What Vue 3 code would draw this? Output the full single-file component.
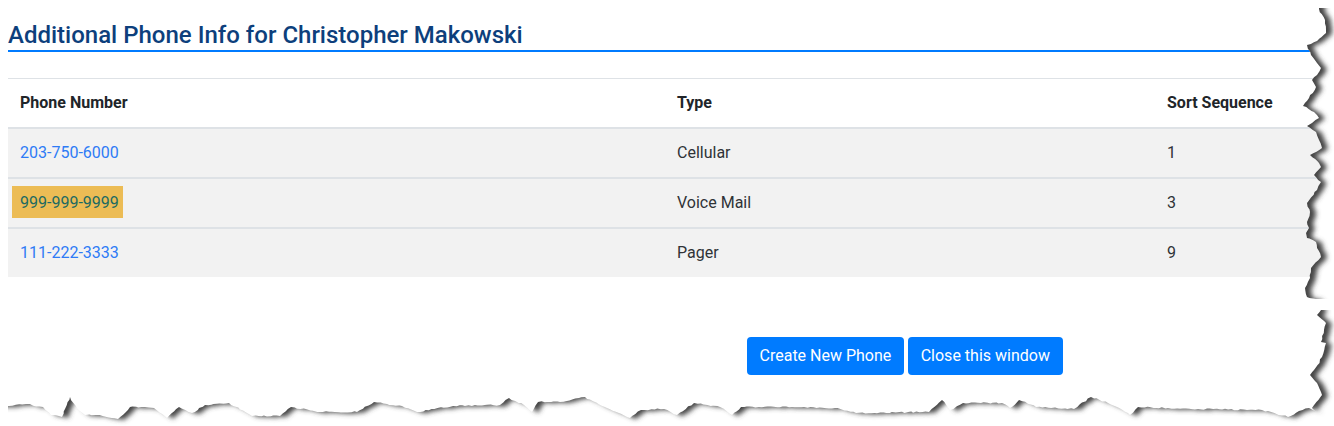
<script setup>
const rows = [
  { phone: '203-750-6000', type: 'Cellular', sort: 1 },
  { phone: '999-999-9999', type: 'Voice Mail', sort: 3, mark: true },
  { phone: '111-222-3333', type: 'Pager', sort: 9 }
]
const right = [
  [1319,9],[1325,20],[1326,33],[1317,41],[1307,45],[1311,55],[1317,63],[1321,68],[1317,75],[1312,80],[1316,87],[1309,98],[1303,106],[1314,112],[1317,115],[1319,118],[1312,123],[1307,126],[1316,132],[1319,140],
  [1322,148],[1310,155],[1319,163],[1321,167],[1314,175],[1321,182],[1317,190],[1307,203],[1310,212],[1307,222],[1309,228],[1306,233],[1307,238],[1316,242],[1317,248],[1321,257],[1311,268],[1310,278],
  [1305,288],[1307,297],[1316,299],[1321,310],[1317,315],[1326,323],[1324,330],[1321,342],[1326,343],[1322,357],[1314,370],[1310,375],[1317,383],[1322,395],[1312,408],[1317,412]
]
const bottom = [
  [9,406],[26,404],[43,407],[51,415],[62,417],[70,397],[77,408],[85,415],[96,415],[118,419],[130,407],[154,408],[167,418],[179,407],[192,413],[205,405],[229,403],[252,416],[280,416],[291,407],[320,412],[357,412],[374,402],[402,406],[417,412],[453,406],[500,405],[509,398],[524,405],[532,412],[538,402],[560,402],[585,397],[607,408],[630,418],[641,410],[664,409],[677,415],[694,403],[720,407],[732,415],[741,407],[792,407],[835,408],[856,413],[929,412],[942,400],[950,410],[963,403],[1002,403],[1010,408],[1019,400],[1036,407],[1074,409],[1091,397],[1108,403],[1117,407],[1130,415],[1138,407],[1198,409],[1262,410],[1288,417],[1299,411],[1309,408]
]
let seed = 7
const rand = () => {
  seed = (seed * 16807) % 2147483647
  return seed / 2147483647 - 0.5
}
const rough = (pts) => {
  const out = []
  pts.forEach((p, i) => {
    out.push(p)
    const q = pts[i + 1]
    if (!q) return
    const len = Math.hypot(q[0] - p[0], q[1] - p[1])
    const n = Math.floor(len / 3)
    for (let k = 1; k < n; k++) {
      const t = k / n
      out.push([
        +(p[0] + (q[0] - p[0]) * t + rand() * 1.4).toFixed(1),
        +(p[1] + (q[1] - p[1]) * t + rand() * 1.4).toFixed(1)
      ])
    }
  })
  return out
}
const page = [[-30, -30], [1319, -30], ...rough(right), ...rough([...bottom].reverse()), [-30, 406]]
const edge = 'M' + page.map((p) => p.join(' ')).join('L') + 'Z'
const outside = 'M-40 -40H1374V466H-40Z' + edge
</script>

<template>
  <div class="page">
    <h1 class="title">Additional Phone Info for Christopher Makowski</h1>
    <table class="phones">
      <colgroup>
        <col class="c1" />
        <col class="c2" />
        <col />
      </colgroup>
      <thead>
        <tr>
          <th>Phone Number</th>
          <th>Type</th>
          <th>Sort Sequence</th>
        </tr>
      </thead>
      <tbody>
        <tr v-for="r in rows" :key="r.phone">
          <td><a href="#" :class="{ mark: r.mark }">{{ r.phone }}</a></td>
          <td>{{ r.type }}</td>
          <td>{{ r.sort }}</td>
        </tr>
      </tbody>
    </table>
    <div class="actions">
      <button type="button">Create New Phone</button>
      <button type="button" class="wide">Close this window</button>
    </div>
    <svg class="tear" width="1334" height="426" viewBox="0 0 1334 426" aria-hidden="true">
      <defs>
        <clipPath id="outside-clip"><path :d="outside" clip-rule="evenodd" /></clipPath>
        <filter id="soft" filterUnits="userSpaceOnUse" x="-60" y="-60" width="1460" height="550"><feGaussianBlur stdDeviation="2.5" /></filter>
      </defs>
      <g clip-path="url(#outside-clip)">
        <rect x="-40" y="-40" width="1414" height="506" fill="#fff" />
        <path :d="edge" transform="translate(6 1)" fill="#444" filter="url(#soft)" />
      </g>
      <rect x="1300" y="0" width="34" height="8" fill="#fff" />
      <rect x="0" y="390" width="8" height="36" fill="#fff" />
      <rect x="1312" y="299" width="22" height="11" fill="#fff" />
    </svg>
  </div>
</template>

<style scoped>
.page {
  position: relative;
  width: 1334px;
  height: 426px;
  overflow: hidden;
  box-sizing: border-box;
  padding: 21px 0 0 8px;
  background: #fff;
  color: #212529;
  font-family: Roboto, "Liberation Sans", sans-serif;
  font-size: 16px;
  line-height: 24px;
}
.title {
  margin: 0 0 26px;
  font-size: 24px;
  font-weight: 500;
  line-height: 29px;
  color: #0d3f7c;
  border-bottom: 2px solid #007bff;
}
.phones {
  width: 1326px;
  table-layout: fixed;
  border-collapse: separate;
  border-spacing: 0;
  border-top: 1px solid #dee2e6;
}
.c1 { width: 657px; }
.c2 { width: 490px; }
th, td {
  padding: 12px;
  text-align: left;
}
th {
  font-weight: 700;
  border-bottom: 2px solid #dee2e6;
}
td {
  background: #f2f2f2;
  color: #2f3337;
  border-bottom: 2px solid #dee2e6;
}
tr:last-child td {
  border-bottom: 0;
}
a {
  color: #2e7bf6;
  text-decoration: none;
}
a.mark {
  display: inline-block;
  margin: -5px -4px -3px -8px;
  padding: 5px 4px 3px 8px;
  background: #ecbc55;
  color: #1d6a62;
}
.actions {
  display: flex;
  gap: 4px;
  margin-top: 60px;
  padding-left: 739px;
}
button {
  height: 38px;
  padding: 0 12.5px;
  border: 0;
  border-radius: 4px;
  background: #007bff;
  color: #fff;
  font: inherit;
}
.wide {
  min-width: 155px;
}
.tear {
  position: absolute;
  left: 0;
  top: 0;
}
</style>
